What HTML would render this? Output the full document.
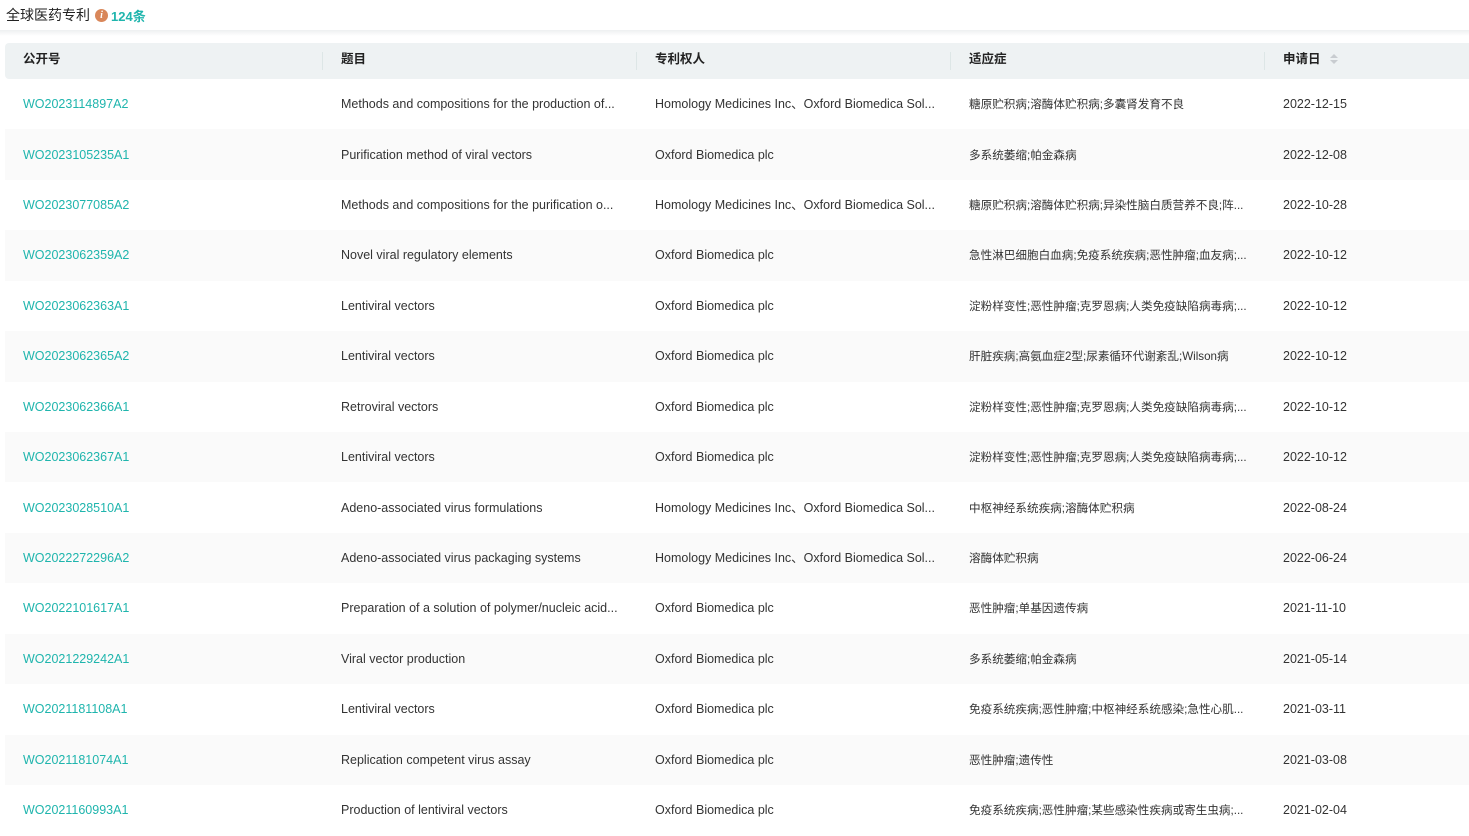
<!DOCTYPE html><html><head><meta charset="utf-8"><style>
*{margin:0;padding:0;box-sizing:border-box}
body{width:1469px;height:827px;overflow:hidden;background:#fff;font-family:"Liberation Sans","Noto Sans CJK SC",sans-serif;color:#333;font-size:12.5px}
.title{position:absolute;left:6px;top:6px;font-size:14px;color:#222;display:flex;align-items:center;height:18px}
.info{display:inline-block;width:13px;height:13px;border-radius:50%;background:#d9875a;color:#fff;font-size:10px;font-weight:bold;text-align:center;line-height:13px;margin:0 3px 0 5px;font-family:"Liberation Serif",serif;font-style:italic}
.cnt{color:#1fb5ad;font-weight:bold;font-size:13px}
.shadow{position:absolute;left:0;top:30px;width:1469px;height:6px;background:linear-gradient(#eef0f1,#fff)}
.head{position:absolute;left:5px;top:43px;width:1464px;height:36px;background:#eef2f3;border-radius:4px 0 0 4px;font-weight:bold;color:#222}
.head .c{top:-2px}
.row{position:absolute;left:5px;width:1464px;height:50.4px}
.row.g{background:#fafafa}
.c{position:absolute;top:0;height:100%;display:flex;align-items:center;white-space:nowrap;line-height:16px}
.cj{font-size:11.6px;top:1px}
.sep{position:absolute;top:9px;width:1px;height:18px;background:#dde6e6}
.l{color:#1fb5ad}
</style></head><body>
<div class="title">全球医药专利<span class="info">i</span><span class="cnt">124条</span></div>
<div class="shadow"></div>
<div class="head">
<div class="c" style="left:18px">公开号</div>
<div class="sep" style="left:317px"></div>
<div class="c" style="left:336px">题目</div>
<div class="sep" style="left:631px"></div>
<div class="c" style="left:650px">专利权人</div>
<div class="sep" style="left:945px"></div>
<div class="c" style="left:964px">适应症</div>
<div class="sep" style="left:1259px"></div>
<div class="c" style="left:1278px">申请日 <svg width="10" height="14" style="margin-left:8px" viewBox="0 0 10 14"><path d="M1 6L5 2L9 6Z" fill="#c8ccd0"/><path d="M1 8L5 12L9 8Z" fill="#c8ccd0"/></svg></div>
</div>
<div id="rows"></div>
<script>
var d=[
["WO2023114897A2","Methods and compositions for the production of...","Homology Medicines Inc、Oxford Biomedica Sol...","糖原贮积病;溶酶体贮积病;多囊肾发育不良","2022-12-15"],
["WO2023105235A1","Purification method of viral vectors","Oxford Biomedica plc","多系统萎缩;帕金森病","2022-12-08"],
["WO2023077085A2","Methods and compositions for the purification o...","Homology Medicines Inc、Oxford Biomedica Sol...","糖原贮积病;溶酶体贮积病;异染性脑白质营养不良;阵...","2022-10-28"],
["WO2023062359A2","Novel viral regulatory elements","Oxford Biomedica plc","急性淋巴细胞白血病;免疫系统疾病;恶性肿瘤;血友病;...","2022-10-12"],
["WO2023062363A1","Lentiviral vectors","Oxford Biomedica plc","淀粉样变性;恶性肿瘤;克罗恩病;人类免疫缺陷病毒病;...","2022-10-12"],
["WO2023062365A2","Lentiviral vectors","Oxford Biomedica plc","肝脏疾病;高氨血症2型;尿素循环代谢紊乱;Wilson病","2022-10-12"],
["WO2023062366A1","Retroviral vectors","Oxford Biomedica plc","淀粉样变性;恶性肿瘤;克罗恩病;人类免疫缺陷病毒病;...","2022-10-12"],
["WO2023062367A1","Lentiviral vectors","Oxford Biomedica plc","淀粉样变性;恶性肿瘤;克罗恩病;人类免疫缺陷病毒病;...","2022-10-12"],
["WO2023028510A1","Adeno-associated virus formulations","Homology Medicines Inc、Oxford Biomedica Sol...","中枢神经系统疾病;溶酶体贮积病","2022-08-24"],
["WO2022272296A2","Adeno-associated virus packaging systems","Homology Medicines Inc、Oxford Biomedica Sol...","溶酶体贮积病","2022-06-24"],
["WO2022101617A1","Preparation of a solution of polymer/nucleic acid...","Oxford Biomedica plc","恶性肿瘤;单基因遗传病","2021-11-10"],
["WO2021229242A1","Viral vector production","Oxford Biomedica plc","多系统萎缩;帕金森病","2021-05-14"],
["WO2021181108A1","Lentiviral vectors","Oxford Biomedica plc","免疫系统疾病;恶性肿瘤;中枢神经系统感染;急性心肌...","2021-03-11"],
["WO2021181074A1","Replication competent virus assay","Oxford Biomedica plc","恶性肿瘤;遗传性","2021-03-08"],
["WO2021160993A1","Production of lentiviral vectors","Oxford Biomedica plc","免疫系统疾病;恶性肿瘤;某些感染性疾病或寄生虫病;...","2021-02-04"]];
var h="";d.forEach(function(r,i){var t=79+i*50.43;h+='<div class="row'+(i%2?' g':'')+'" style="top:'+t+'px"><div class="c l" style="left:18px">'+r[0]+'</div><div class="c" style="left:336px">'+r[1]+'</div><div class="c" style="left:650px">'+r[2]+'</div><div class="c cj" style="left:964px">'+r[3]+'</div><div class="c" style="left:1278px">'+r[4]+'</div></div>';});
document.getElementById("rows").innerHTML=h;
</script>
</body></html>
